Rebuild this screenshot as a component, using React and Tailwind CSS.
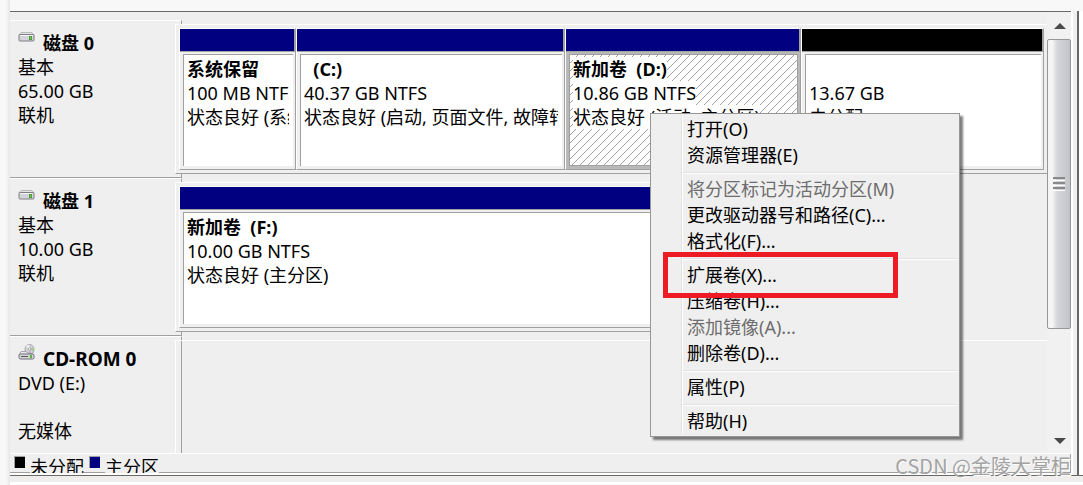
import clsx from "clsx";

const disks = [
  {
    name: "磁盘 0",
    lines: ["基本", "65.00 GB", "联机"],
    width: "w-full",
    columns: "grid-cols-[117fr_269fr_236fr_243fr]",
    volumes: [
      { name: "系统保留", size: "100 MB NTFS", status: "状态良好 (系统, 活动)", color: "bg-[#000080]" },
      { name: "\u00a0 (C:)", size: "40.37 GB NTFS", status: "状态良好 (启动, 页面文件, 故障转储)", color: "bg-[#000080]" },
      { name: "新加卷  (D:)", size: "10.86 GB NTFS", status: "状态良好 (活动, 主分区)", color: "bg-[#000080]", selected: true },
      { name: "\u00a0", size: "13.67 GB", status: "未分配", color: "bg-black" },
    ],
  },
  {
    name: "磁盘 1",
    lines: ["基本", "10.00 GB", "联机"],
    width: "w-[85%]",
    columns: "grid-cols-1",
    volumes: [
      { name: "新加卷  (F:)", size: "10.00 GB NTFS", status: "状态良好 (主分区)", color: "bg-[#000080]" },
    ],
  },
];

const menuGroups = [
  [{ label: "打开(O)" }, { label: "资源管理器(E)" }],
  [
    { label: "将分区标记为活动分区(M)", disabled: true },
    { label: "更改驱动器号和路径(C)..." },
    { label: "格式化(F)..." },
  ],
  [
    { label: "扩展卷(X)...", marked: true },
    { label: "压缩卷(H)..." },
    { label: "添加镜像(A)...", disabled: true },
    { label: "删除卷(D)..." },
  ],
  [{ label: "属性(P)" }],
  [{ label: "帮助(H)" }],
];

function DiskIcon() {
  return (
    <svg className="mt-px" width="17" height="10" viewBox="0 0 17 10" aria-hidden="true">
      <path d="M3 0.5h11l2 3h-15z" fill="#e4e4e6" stroke="#b8b8ba" />
      <rect x="1" y="2.5" width="15" height="6.5" rx="1" fill="#d3d3da" stroke="#7e7e84" />
      <path d="M2 3.5h13" stroke="#f4f4f6" />
      <rect x="11" y="4" width="3" height="4" fill="#4f9a3a" />
      <rect x="12" y="5" width="1" height="2" fill="#7ad04f" />
    </svg>
  );
}

function CdIcon() {
  return (
    <svg className="-mt-[3px]" width="17" height="16" viewBox="0 0 17 16" aria-hidden="true">
      <ellipse cx="11.5" cy="5.5" rx="4.5" ry="5" fill="#d2d2d8" stroke="#a3a3a8" />
      <path d="M11.5 5.5L8 2.5l3-2z" fill="#f4f4f6" />
      <path d="M11.5 5.5l4-2v4z" fill="#9fd08c" />
      <path d="M11.5 5.5l2 4h-3z" fill="#c9a9d6" />
      <circle cx="11.5" cy="5" r="1.3" fill="#fff" stroke="#8a8a90" strokeWidth="0.7" />
      <path d="M3 7.5h5l3 2h3l2 1.5h-15z" fill="#e9e9ec" stroke="#a8a8ac" />
      <rect x="1" y="10" width="15" height="5" rx="1.5" fill="#d5d5dc" stroke="#6f6f75" />
      <path d="M3 12.5h7" stroke="#55555a" />
      <rect x="12" y="11" width="2" height="3" fill="#58b53c" />
    </svg>
  );
}

function DiskHeader({ icon, name, lines, titleSize }) {
  return (
    <div className="w-[165px] shrink-0 border-t border-t-white pt-2.5 pl-2">
      <div className="flex h-6 items-start gap-2">
        <span className="w-[17px]">{icon}</span>
        <h2 className={clsx("font-bold", titleSize)}>{name}</h2>
      </div>
      {lines.map((line, i) => (
        <p key={i} className="min-h-6">{line}</p>
      ))}
    </div>
  );
}

function Volume({ volume }) {
  const { name, size, status, color, selected } = volume;
  const label = clsx("whitespace-pre", selected && "bg-white");
  return (
    <div className="flex min-w-0 flex-col border border-t-white border-r-[#a0a0a0] border-b-[#a0a0a0] border-l-white">
      <div className={clsx("h-[23px] border-r border-b border-[#a0a0a0]", color)} />
      <div className={clsx("pt-0.5 pr-0.5 pb-[3px] pl-[3px]", selected && "bg-[#b8b8b8]")}>
        <div
          className={clsx(
            "h-28 border-t border-l border-[#a0a0a0] bg-white pt-0.5 pr-1 pl-[3px]",
            selected &&
              "border-r border-b bg-[linear-gradient(135deg,transparent_45%,#a0a0a0_45%,#a0a0a0_55%,transparent_55%)] bg-[length:8px_8px]"
          )}
        >
          <div className="overflow-hidden">
            <p className="whitespace-nowrap font-bold"><span className={label}>{name}</span></p>
            <p className="whitespace-nowrap"><span className={label}>{size}</span></p>
            <p className="whitespace-nowrap"><span className={label}>{status}</span></p>
          </div>
        </div>
      </div>
    </div>
  );
}

function DiskRow({ disk }) {
  return (
    <section className="flex">
      <div className="flex border-b border-[#a0a0a0]">
        <DiskHeader icon={<DiskIcon />} name={disk.name} lines={disk.lines} />
      </div>
      <div className="min-w-0 flex-1">
        <div className="h-1 w-[7px] border-t border-r border-t-white border-r-[#a0a0a0]" />
        <div
          className={clsx(
            "grid border-t border-b border-l border-t-white border-b-[#a0a0a0] border-l-white p-[3px]",
            disk.width,
            disk.columns
          )}
        >
          {disk.volumes.map((volume) => (
            <Volume key={volume.name} volume={volume} />
          ))}
        </div>
        <div className="h-1 w-[7px] border-r border-b border-[#a0a0a0]" />
      </div>
    </section>
  );
}

function CdRow() {
  return (
    <section className="flex h-[117px]">
      <DiskHeader icon={<CdIcon />} name="CD-ROM 0" lines={["DVD (E:)", "", "无媒体"]} titleSize="text-[19px]" />
      <div className="flex min-w-0 flex-1 flex-col">
        <div className="h-1 w-[7px] border-t border-r border-t-white border-r-[#a0a0a0]" />
        <div className="flex flex-1 border-t border-l border-white">
          <div className="w-1.5 border-r border-[#a0a0a0]" />
        </div>
      </div>
    </section>
  );
}

function ScrollBar() {
  return (
    <div className="flex w-6 shrink-0 flex-col bg-[#f1f1f1]">
      <button type="button" aria-label="向上滚动" className="flex h-[27px] items-center justify-center pl-0.5">
        <svg width="12" height="6" viewBox="0 0 12 6"><path d="M6 0l6 6H0z" fill="#4a4a4a" /></svg>
      </button>
      <div className="flex h-[290px] flex-col items-center justify-center gap-px rounded-xs border border-[#979797] bg-linear-to-r from-[#f5f5f5] from-20% via-[#d6d7d9] via-40% to-[#c3c3cb]">
        {[0, 1, 2].map((i) => (
          <span key={i} className="h-1 w-3 border-t-2 border-b border-t-[#8a8a8a] border-b-white" />
        ))}
      </div>
      <button type="button" aria-label="向下滚动" className="mt-auto flex h-6 items-center justify-center pl-0.5">
        <svg width="12" height="6" viewBox="0 0 12 6"><path d="M0 0h12L6 6z" fill="#4a4a4a" /></svg>
      </button>
    </div>
  );
}

function LegendItem({ color, label }) {
  return (
    <li className="flex gap-[5px]">
      <span className={clsx("mt-0.5 h-3 w-[11px] border-t border-l border-[#a0a0a0]", color)} />
      <span className="h-[19px] overflow-hidden bg-[#efefef] pt-px">{label}</span>
    </li>
  );
}

function ContextMenu() {
  return (
    <div
      role="menu"
      className="absolute top-[113px] left-[650px] w-[310px] border border-[#979797] bg-[#efefef] p-0.5 shadow-[3px_3px_2px_#00000080]"
    >
      <div className="flex">
        <div className="w-[30px] shrink-0 border-r border-white shadow-[inset_-1px_0_#e2e2e2]" />
        <div className="min-w-0 flex-1">
          {menuGroups.map((group, i) => (
            <div key={i}>
              {i > 0 && <div role="separator" className="mt-1 mb-0.5 h-0.5 border-t border-b border-t-[#e0e0e0] border-b-white" />}
              {group.map((item) => (
                <div key={item.label} className="relative">
                  <button
                    type="button"
                    role="menuitem"
                    disabled={item.disabled}
                    className={clsx("block h-[26px] w-full pl-1 text-left whitespace-nowrap", item.disabled && "text-[#6d6d6d]")}
                  >
                    {item.label}
                  </button>
                  {item.marked && (
                    <div className="pointer-events-none absolute -top-2.5 -left-5 z-10 h-[46px] w-[235px] border-5 border-[#ed1c24]" />
                  )}
                </div>
              ))}
            </div>
          ))}
        </div>
      </div>
    </div>
  );
}

export default function App() {
  return (
    <main className="relative flex min-h-screen flex-col bg-white font-['Noto_Sans','Noto_Sans_CJK_SC',sans-serif] text-[18px] leading-6 text-black">
      <div className="flex flex-1">
        <div className="w-2.5 shrink-0 bg-linear-to-r from-[#f8f8f8] from-60% to-[#e6e6e6]" />
        <div className="flex min-w-0 flex-1 flex-col">
          <div className="h-[11px] bg-[#f8f8f8]" />
          <div className="flex">
            <div className="min-w-0 flex-1 border-t border-[#696969] bg-[#efefef]">
              <div className="flex">
                <div className="min-w-0 flex-1 pt-2">
                  {disks.map((disk) => (
                    <DiskRow key={disk.name} disk={disk} />
                  ))}
                  <CdRow />
                </div>
                <ScrollBar />
              </div>
              <ul className="flex h-5 gap-[5px] border-t border-t-white pl-1 shadow-[inset_-1px_-1px_#a0a0a0]">
                <LegendItem color="bg-black" label="未分配" />
                <LegendItem color="bg-[#000080]" label="主分区" />
              </ul>
              <div className="h-0.5 bg-white" />
            </div>
            <div className="w-2 border-r-2 border-l-2 border-r-[#696969] border-l-white bg-[#efefef]" />
            <div className="w-1 bg-white" />
          </div>
          <div className="h-2 border-t border-b border-t-[#696969] border-b-white bg-[#f0eded]" />
        </div>
      </div>
      <ContextMenu />
      <p className="pointer-events-none absolute right-3 bottom-[7px] font-['Noto_Sans_CJK_SC',sans-serif] text-[20px] text-[#a3a3a3] [text-shadow:1px_1px_#ffffff]">
        CSDN @金陵大掌柜
      </p>
    </main>
  );
}
